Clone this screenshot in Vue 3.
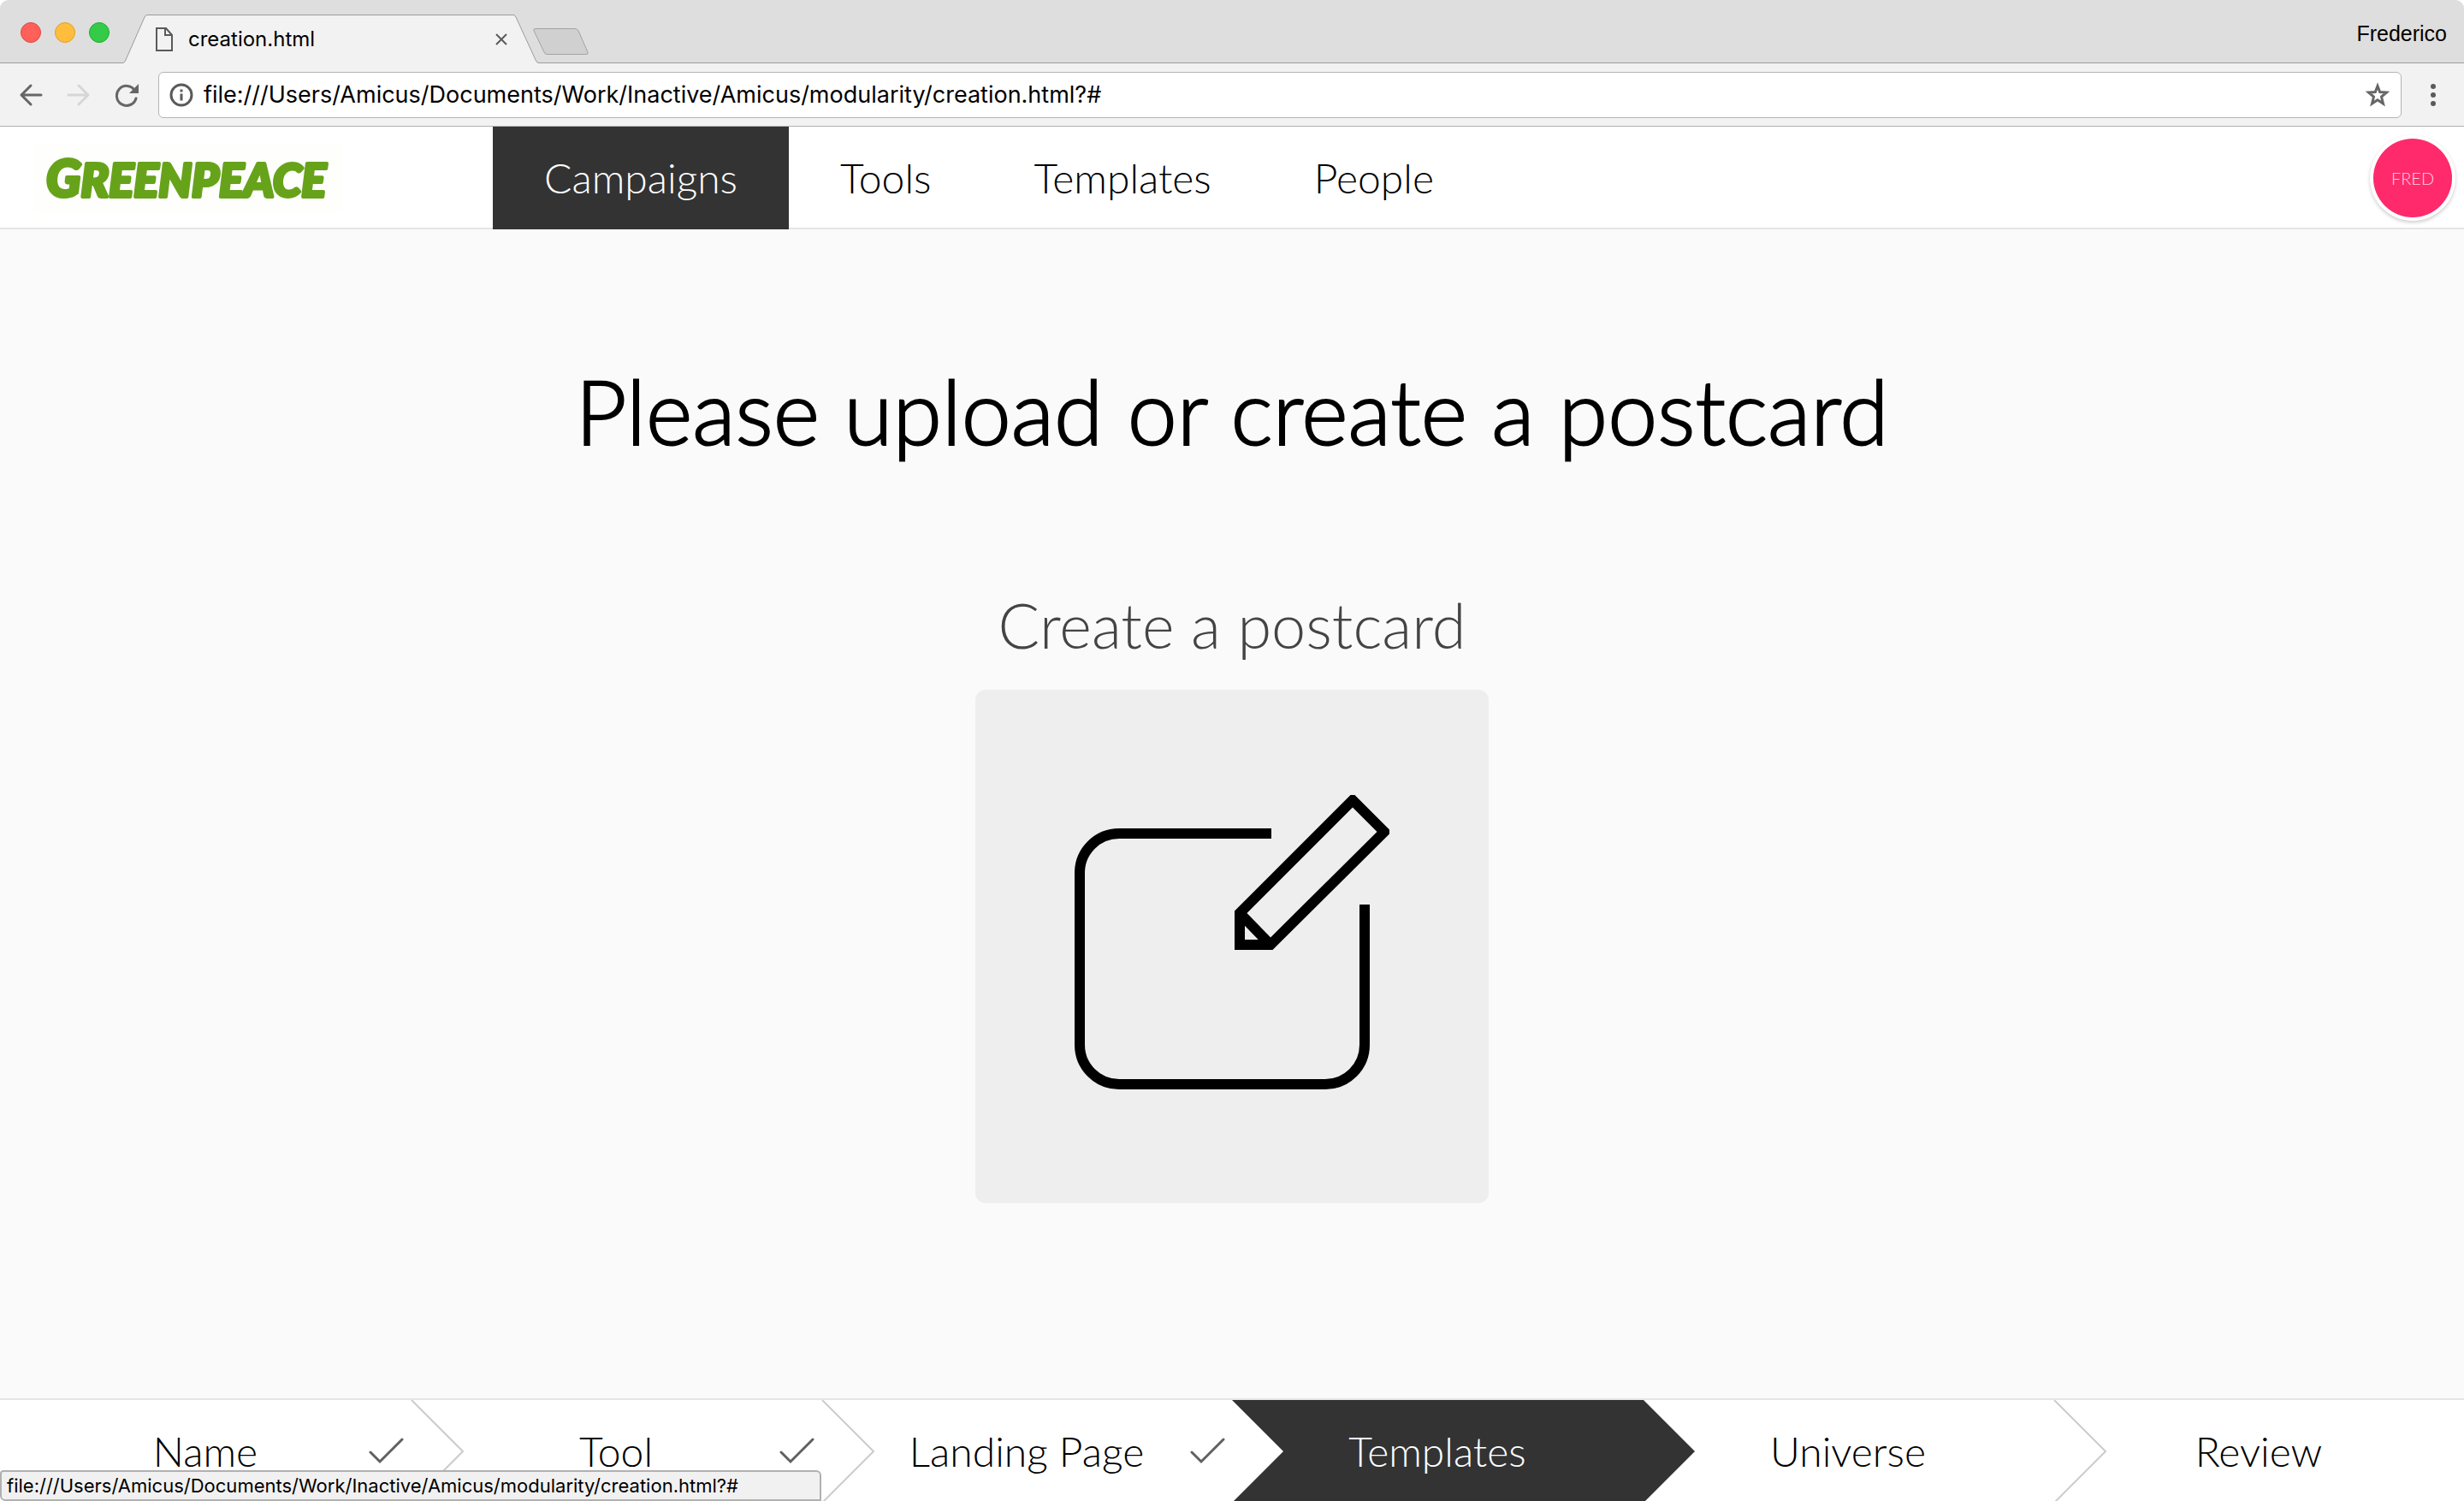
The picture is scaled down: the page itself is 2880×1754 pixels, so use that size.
<script setup>
import { ref } from 'vue'

const address = ref('file:///Users/Amicus/Documents/Work/Inactive/Amicus/modularity/creation.html?#')

const sections = [
  { label: 'Campaigns', active: true },
  { label: 'Tools' },
  { label: 'Templates' },
  { label: 'People' },
]

const steps = [
  { label: 'Name', done: true, divider: true },
  { label: 'Tool', done: true, divider: true },
  { label: 'Landing Page', done: true },
  { label: 'Templates', active: true },
  { label: 'Universe', divider: true },
  { label: 'Review' },
]
</script>

<template>
  <div class="window">
    <div class="titlebar">
      <div class="lights">
        <button class="light close" aria-label="Close window"></button>
        <button class="light minimize" aria-label="Minimize window"></button>
        <button class="light maximize" aria-label="Maximize window"></button>
      </div>
      <div class="tab">
        <svg class="tab-shape" width="486" height="74" viewBox="0 0 486 74" aria-hidden="true">
          <path d="M0 74V73.5Q2 73 3 70L25 20Q26 17.5 28 17.5H456Q458 17.5 459 20L482 70Q483 73.5 486 73.5V74Z" fill="#f2f2f2" />
          <path d="M0 73.5Q2 73 3 70L25 20Q26 17.5 28 17.5H456Q458 17.5 459 20L482 70Q483 73.5 486 73.5" fill="none" stroke="#9c9c9c" />
        </svg>
        <svg class="page-icon" width="20" height="28" viewBox="0 0 20 28" fill="none" stroke="#5a5a5a" stroke-width="2" aria-hidden="true">
          <path d="M1 1H12L19 9V27H1ZM11 1V9H19" />
        </svg>
        <span class="tab-title">creation.html</span>
        <button class="tab-close" aria-label="Close tab">
          <svg width="14" height="14" viewBox="0 0 14 14" stroke="#5a5a5a" stroke-width="2"><path d="M1 1L13 13M13 1L1 13" /></svg>
        </button>
      </div>
      <button class="new-tab" aria-label="New tab">
        <svg width="68" height="34" viewBox="0 0 68 34">
          <path d="M4 1.5H50Q53 1.5 54 4L65 29Q66 31.5 63 31.5H18Q15 31.5 14 29L2 4Q1 1.5 4 1.5Z" fill="#d0d0d0" stroke="#a3a3a3" />
        </svg>
      </button>
      <span class="profile">Frederico</span>
    </div>

    <div class="toolbar">
      <button class="tool" aria-label="Back">
        <svg width="28" height="28" viewBox="0 0 28 28" fill="none" stroke="#666" stroke-width="3" stroke-linecap="round" stroke-linejoin="round"><path d="M26 14H3M14 3L3 14L14 25" /></svg>
      </button>
      <button class="tool" aria-label="Forward">
        <svg width="28" height="28" viewBox="0 0 28 28" fill="none" stroke="#d6d6d6" stroke-width="3" stroke-linecap="round" stroke-linejoin="round"><path d="M2 14H25M14 3L25 14L14 25" /></svg>
      </button>
      <button class="tool" aria-label="Reload">
        <svg width="28" height="28" viewBox="0 0 28 28"><path d="M23.500 8.500A11.500 11.500 0 1 0 25 18" fill="none" stroke="#666" stroke-width="3" stroke-linecap="round" /><path d="M28 1V12H17Z" fill="#666" /></svg>
      </button>
      <div class="address">
        <svg width="28" height="28" viewBox="0 0 28 28" aria-hidden="true"><circle cx="14" cy="14" r="12" fill="none" stroke="#5a5a5a" stroke-width="3" /><path d="M12.500 7.500H15.500V10.500H12.500ZM12.500 12.500H15.500V20.500H12.500Z" fill="#5a5a5a" /></svg>
        <input v-model="address" type="text" aria-label="Address" />
        <button class="tool" aria-label="Bookmark this page">
          <svg width="30" height="30" viewBox="0 0 30 30" fill="none" stroke="#666" stroke-width="3"><path d="M15 4.500L17.700 11.500L25.500 12L19.500 17L21.500 25L15 20.700L8.500 25L10.500 17L4.500 12L12.300 11.500Z" /></svg>
        </button>
      </div>
      <button class="tool" aria-label="Menu">
        <svg width="28" height="28" viewBox="0 0 28 28" fill="#5a5a5a"><circle cx="14" cy="4" r="3" /><circle cx="14" cy="14" r="3" /><circle cx="14" cy="24" r="3" /></svg>
      </button>
    </div>

    <header class="header">
      <a class="logo" href="#">
        <svg width="360" height="80" viewBox="0 0 360 80" role="img" aria-label="Greenpeace">
          <rect width="360" height="80" fill="#fefefc" />
          <text x="14" y="62" fill="#66a31a" stroke="#66a31a" stroke-width="4" stroke-linejoin="round"><tspan class="initial">G</tspan>REENPEACE</text>
        </svg>
      </a>
      <nav class="sections">
        <a v-for="section in sections" :key="section.label" href="#" :class="{ active: section.active }">{{ section.label }}</a>
      </nav>
      <button class="avatar">FRED</button>
    </header>

    <main class="content">
      <h1>Please upload or create a postcard</h1>
      <h2 id="create-label">Create a postcard</h2>
      <button class="card" aria-labelledby="create-label">
        <svg viewBox="0 0 600 600" fill="none" stroke="#000" stroke-width="12">
          <clipPath id="pencil-bounds"><rect x="300" y="123" width="184" height="190" /></clipPath>
          <path d="M346 168H168A46 46 0 0 0 122 214V415A46 46 0 0 0 168 461H409A46 46 0 0 0 455 415V251" />
          <path d="M309 261L441 129L478 166L345 298H309ZL345 298" clip-path="url(#pencil-bounds)" />
        </svg>
      </button>
    </main>

    <footer class="steps">
      <a v-for="step in steps" :key="step.label" href="#" class="step" :class="{ active: step.active }">
        <span class="step-label">{{ step.label }}</span>
        <svg v-if="step.done" class="check" width="42" height="32" viewBox="0 0 42 32" fill="none" stroke="#606060" stroke-width="3" stroke-linecap="round" aria-label="Done"><path d="M3 17L14 28L40 2" /></svg>
        <svg v-if="step.divider" class="divider" width="62" height="120" viewBox="0 0 62 120" fill="none" stroke="#ccc" stroke-width="2" aria-hidden="true"><path d="M1 0L61 60L1 120" /></svg>
      </a>
    </footer>

    <div class="status">{{ address }}</div>
  </div>
</template>

<style>
body {
  margin: 0;
}
</style>

<style scoped>
* {
  box-sizing: border-box;
}

.window {
  display: flex;
  flex-direction: column;
  min-height: 100vh;
  background: #fff;
  color: #000;
  font-family: Lato, "Open Sans", sans-serif;
  font-weight: 300;
}

button {
  padding: 0;
  border: 0;
  background: none;
  font: inherit;
  color: inherit;
}

svg {
  display: block;
  flex: none;
}

a {
  color: inherit;
  text-decoration: none;
}

.titlebar {
  display: flex;
  align-items: center;
  height: 74px;
  padding: 0 20px 0 24px;
  border-radius: 10px 10px 0 0;
  background: #dedede;
  box-shadow: inset 0 -1px #9c9c9c;
  font-family: Inter, Roboto, sans-serif;
  font-weight: 400;
}

.lights {
  display: flex;
  gap: 16px;
  margin-right: 16px;
  padding-top: 2px;
}

.light {
  width: 24px;
  height: 24px;
  border: 1px solid;
  border-radius: 50%;
}

.close {
  background: #ff6059;
  border-color: #e2463f;
}

.minimize {
  background: #ffbd3e;
  border-color: #dfa023;
}

.maximize {
  background: #33cb48;
  border-color: #1fac2b;
}

.tab {
  position: relative;
  display: flex;
  align-items: center;
  width: 486px;
  height: 74px;
  padding: 18px 37px 0 38px;
}

.tab-shape {
  position: absolute;
  top: 0;
  left: 0;
}

.page-icon,
.tab-title,
.tab-close {
  position: relative;
}

.tab-title {
  flex: 1;
  margin-left: 18px;
  font-size: 24px;
  line-height: 32px;
}

.new-tab {
  margin: 24px 0 0 -8px;
}

.profile {
  margin-left: auto;
  font-family: "Liberation Sans", Arial, sans-serif;
  font-size: 25px;
  line-height: 32px;
  padding-top: 4px;
}

.toolbar {
  display: flex;
  align-items: center;
  gap: 28px;
  height: 74px;
  padding: 0 22px;
  border-bottom: 1px solid #b0b0b0;
  background: #f2f2f2;
}

.address {
  display: flex;
  flex: 1;
  align-items: center;
  height: 54px;
  margin-left: -5px;
  margin-right: -5px;
  padding: 0 12px;
  border: 1px solid #b4b4b4;
  border-radius: 6px;
  background: #fff;
}

.address input {
  flex: 1;
  min-width: 0;
  height: 40px;
  margin: 0;
  padding: 0 12px;
  border: 0;
  outline: 0;
  background: none;
  color: #000;
  font: 400 27px/40px Inter, Roboto, sans-serif;
}

.header {
  display: flex;
  height: 120px;
  border-bottom: 2px solid #e5e5e5;
  font-size: 48px;
  line-height: 120px;
}

.logo {
  width: 20%;
  padding: 20px 40px;
}

.logo svg {
  overflow: visible;
}

.logo text {
  font: italic 900 54px Lato, sans-serif;
}

.logo .initial {
  font-size: 60px;
}

.sections {
  display: flex;
  height: 120px;
}

.sections a {
  padding: 0 60px;
}

.sections .active {
  background: #333;
  color: #fff;
}

.avatar {
  width: 92px;
  height: 92px;
  margin: 14px 14px 0 auto;
  border-radius: 50%;
  background: #ff2a6b;
  box-shadow: 0 0 0 4px #fff, 0 2px 4px 4px rgba(0, 0, 0, 0.2);
  color: rgba(255, 255, 255, 0.8);
  font-size: 20px;
  line-height: 24px;
}

.content {
  display: flex;
  flex: 1;
  flex-direction: column;
  align-items: center;
  padding: 150px 40px;
  background: #fafafa;
}

h1,
h2 {
  margin: 0;
  font-weight: 300;
  text-align: center;
}

h1 {
  font-size: 104px;
  line-height: 124px;
  -webkit-text-stroke: 2px #000;
}

h2 {
  margin: 144px 0 32px;
  color: #444;
  font-size: 72px;
  line-height: 88px;
}

.card {
  width: 600px;
  border-radius: 12px;
  background: #eee;
}

.steps {
  display: flex;
  height: 120px;
  border-top: 2px solid #e5e5e5;
  overflow: hidden;
  font-size: 48px;
  line-height: 120px;
}

.step {
  position: relative;
  display: grid;
  flex: 1 1 0;
  grid-template-columns: 1fr auto 1fr;
  align-items: center;
  height: 120px;
}

.step-label {
  position: relative;
  grid-column: 2;
}

.check {
  justify-self: end;
  margin-right: 8px;
}

.divider {
  position: absolute;
  top: 0;
  left: 100%;
}

.step.active {
  z-index: 1;
  color: #fff;
}

.step.active::before {
  content: "";
  position: absolute;
  inset: 0 -61px 0 0;
  background: #333;
  clip-path: polygon(0 0, calc(100% - 60px) 0, 100% 50%, calc(100% - 60px) 100%, 0 100%, 60px 50%);
}

.status {
  position: fixed;
  z-index: 2;
  bottom: 0;
  left: 0;
  width: 960px;
  padding: 0 6px;
  border: 2px solid #b0b0b0;
  border-radius: 4px 6px 0 6px;
  background: #f1f1f1;
  font: 400 22px/32px Inter, Roboto, sans-serif;
}
</style>
